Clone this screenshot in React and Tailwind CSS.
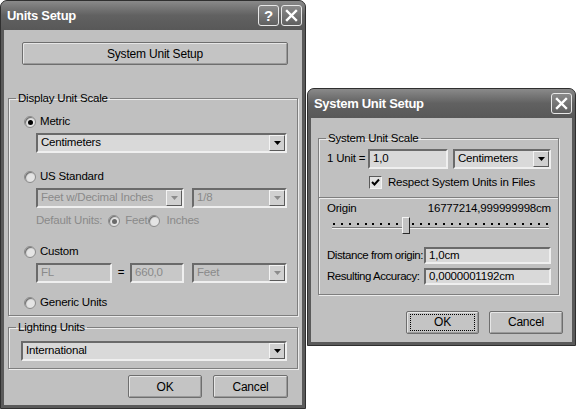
import React from "react";

// Shared look
const FONT = "font-['Liberation_Sans',Arial,sans-serif]";
const SUNKEN =
  "border-2 border-t-[#6a6a6a] border-l-[#6a6a6a] border-b-[#efefef] border-r-[#efefef]";

const TitleButton = ({ children }) => (
  <span className="flex h-[21px] w-[21px] items-center justify-center rounded-[3px] border border-[#e8e8e8] bg-gradient-to-b from-[#8a8a8a] to-[#606060] text-[15px] font-bold leading-none text-white">
    {children}
  </span>
);

const CloseGlyph = () => (
  <svg width="13" height="13" viewBox="0 0 13 13">
    <path d="M2 2 L11 11 M11 2 L2 11" stroke="#fff" strokeWidth="2.4" strokeLinecap="square" />
  </svg>
);

const Window = ({ title, help, className = "", children }) => (
  <div className={`flex flex-col rounded-t-[7px] border border-[#2f2f2f] bg-[#5a5a5a] ${className}`}>
    <div className="flex h-[29px] shrink-0 items-center justify-between rounded-t-[6px] bg-gradient-to-b from-[#8a8a8a] via-[#616161] to-[#585858] pl-[6px] pr-[3px]">
      <span className="text-[13px] font-bold tracking-[-0.3px] text-white">{title}</span>
      <div className="flex gap-[2px]">
        {help && <TitleButton>?</TitleButton>}
        <TitleButton>
          <CloseGlyph />
        </TitleButton>
      </div>
    </div>
    <div className="mx-[3px] mb-[3px] flex-1 bg-[#c0c0c0]">{children}</div>
  </div>
);

const Button = ({ className = "", focused, children }) => (
  <div
    className={`flex items-center justify-center rounded-[2px] border border-[#6e6e6e] bg-[#c4c4c4] shadow-[inset_1px_1px_0_#e6e6e6,inset_-1px_-1px_0_#9a9a9a] text-[12px] text-black ${className}`}
  >
    {focused ? (
      <span className="flex h-[17px] w-[65px] items-center justify-center border border-dotted border-black">
        {children}
      </span>
    ) : (
      children
    )}
  </div>
);

const Arrow = ({ disabled }) => (
  <span className="flex h-[16px] w-[16px] shrink-0 items-center justify-center border border-t-[#f4f4f4] border-l-[#f4f4f4] border-b-[#5a5a5a] border-r-[#5a5a5a] bg-[#d0d0d0]">
    <svg width="7" height="4" viewBox="0 0 7 4">
      <path d="M0 0 H7 L3.5 4 Z" fill={disabled ? "#8c8c8c" : "#000"} />
    </svg>
  </span>
);

const Dropdown = ({ value, disabled, className = "" }) => (
  <div
    className={`flex h-[20px] items-center ${SUNKEN} ${
      disabled ? "bg-[#c4c4c4] text-[#8a8a8a]" : "bg-[#d9d9d9] text-black"
    } ${className}`}
  >
    <span className="flex-1 truncate pl-[3px]">{value}</span>
    <Arrow disabled={disabled} />
  </div>
);

const Field = ({ value, disabled, className = "" }) => (
  <div
    className={`flex shrink-0 items-center whitespace-nowrap ${SUNKEN} ${
      disabled ? "bg-[#c8c8c8] text-[#8a8a8a]" : "bg-[#d9d9d9] text-black"
    } pl-[3px] ${className}`}
  >
    {value}
  </div>
);

const Radio = ({ checked, disabled }) => (
  <span className="flex h-[12px] w-[12px] shrink-0 items-center justify-center rounded-full border border-[#8a8a8a] bg-[#e4e4e4] shadow-[inset_1px_1px_1px_#6a6a6a]">
    {checked && (
      <span className={`h-[5px] w-[5px] rounded-full ${disabled ? "bg-[#6a6a6a]" : "bg-black"}`} />
    )}
  </span>
);

const Group = ({ label, className = "", children }) => (
  <fieldset
    className={`border border-[#7e7e7e] shadow-[1px_1px_0_#ececec,inset_1px_1px_0_#ececec] ${className}`}
  >
    <legend className="ml-[7px] px-[2px] leading-[14px] text-black">{label}</legend>
    {children}
  </fieldset>
);

const UnitsSetup = () => (
  <Window title="Units Setup" help className="h-[409px] w-[306px]">
    <div className="flex flex-col pt-[12px]">
      <Button className="ml-[18px] h-[23px] w-[266px]">System Unit Setup</Button>

      <Group label="Display Unit Scale" className="ml-[4px] mt-[26px] w-[290px] pb-[5px]">
        <div className="mt-[10px] flex h-[14px] items-center gap-[4px] pl-[15px]">
          <Radio checked />
          <span>Metric</span>
        </div>
        <Dropdown value="Centimeters" className="ml-[27px] mt-[4px] w-[251px]" />

        <div className="mt-[17px] flex h-[14px] items-center gap-[4px] pl-[15px]">
          <Radio />
          <span>US Standard</span>
        </div>
        <div className="ml-[27px] mt-[4px] flex gap-[8px]">
          <Dropdown value="Feet w/Decimal Inches" disabled className="w-[148px]" />
          <Dropdown value="1/8" disabled className="w-[95px]" />
        </div>
        <div className="ml-[27px] mt-[6px] flex h-[14px] items-center text-[#8a8a8a]">
          <span>Default Units:</span>
          <span className="ml-[6px]">
            <Radio checked disabled />
          </span>
          <span className="ml-[5px]">Feet</span>
          <span className="ml-[1px]">
            <Radio disabled />
          </span>
          <span className="ml-[6px]">Inches</span>
        </div>

        <div className="mt-[17px] flex h-[14px] items-center gap-[4px] pl-[15px]">
          <Radio />
          <span>Custom</span>
        </div>
        <div className="ml-[27px] mt-[4px] flex items-center">
          <Field value="FL" disabled className="h-[20px] w-[76px]" />
          <span className="w-[18px] text-center">=</span>
          <Field value="660,0" disabled className="h-[20px] w-[54px]" />
          <Dropdown value="Feet" disabled className="ml-[8px] w-[95px]" />
        </div>

        <div className="mt-[13px] flex h-[14px] items-center gap-[4px] pl-[15px]">
          <Radio />
          <span>Generic Units</span>
        </div>
      </Group>

      <Group label="Lighting Units" className="ml-[4px] mt-[4px] w-[290px] pb-[7px]">
        <Dropdown value="International" className="ml-[12px] mt-[7px] w-[266px]" />
      </Group>

      <div className="mt-[6px] flex justify-end gap-[11px] pr-[14px]">
        <Button className="h-[23px] w-[74px]">OK</Button>
        <Button className="h-[23px] w-[75px]">Cancel</Button>
      </div>
    </div>
  </Window>
);

const Slider = () => (
  <div className="relative ml-[13px] mt-[1px] h-[17px] w-[217px]">
    <div className="flex h-[8px] items-end justify-between px-[1px]">
      {Array.from({ length: 28 }).map((_, i) => (
        <span key={i} className="h-[2px] w-[2px] bg-black" />
      ))}
    </div>
    <div className="mt-[2px] h-[2px] border-t border-t-[#7a7a7a] border-b border-b-[#f0f0f0]" />
    <span className="absolute left-[70px] top-0 h-[17px] w-[8px] border border-t-[#f4f4f4] border-l-[#f4f4f4] border-b-[#2a2a2a] border-r-[#2a2a2a] bg-[#c4c4c4]" />
  </div>
);

const SystemUnitSetup = () => (
  <Window title="System Unit Setup" className="mt-[88px] ml-[1px] h-[258px] w-[269px]">
    <div className="flex flex-col pt-[13px]">
      <Group label="System Unit Scale" className="ml-[7px] w-[241px] pb-[8px]">
        <div className="mt-[4px] flex items-center whitespace-nowrap pl-[8px]">
          <span className="w-[41px]">1 Unit =</span>
          <Field value="1,0" className="h-[20px] w-[80px]" />
          <Dropdown value="Centimeters" className="ml-[5px] w-[98px]" />
        </div>
        <div className="ml-[50px] mt-[7px] flex h-[13px] items-center gap-[6px] whitespace-nowrap">
          <span className="flex h-[13px] w-[13px] items-center justify-center border border-t-[#5a5a5a] border-l-[#5a5a5a] border-b-[#f2f2f2] border-r-[#f2f2f2] bg-[#e2e2e2]">
            <svg width="9" height="9" viewBox="0 0 9 9">
              <path d="M1 4 L3.5 6.5 L8 1.5" fill="none" stroke="#000" strokeWidth="2" />
            </svg>
          </span>
          <span>Respect System Units in Files</span>
        </div>
        <div className="mt-[8px] border-t border-t-[#7e7e7e] shadow-[0_1px_0_#ececec]" />
        <div className="mt-[4px] flex h-[14px] items-center justify-between whitespace-nowrap pl-[8px] pr-[7px]">
          <span>Origin</span>
          <span>16777214,999999998cm</span>
        </div>
        <Slider />
        <div className="mt-[13px] flex items-center whitespace-nowrap pl-[8px] pr-[7px]">
          <span className="shrink-0 tracking-[-0.45px]">Distance from origin:</span>
          <Field value="1,0cm" className="ml-auto h-[17px] w-[127px]" />
        </div>
        <div className="mt-[4px] flex items-center whitespace-nowrap pl-[8px] pr-[7px]">
          <span className="shrink-0 tracking-[-0.45px]">Resulting Accuracy:</span>
          <Field value="0,0000001192cm" className="ml-auto h-[17px] w-[127px]" />
        </div>
      </Group>

      <div className="mt-[16px] flex justify-end gap-[10px] pr-[9px]">
        <Button focused className="h-[23px] w-[73px]">OK</Button>
        <Button className="h-[23px] w-[74px]">Cancel</Button>
      </div>
    </div>
  </Window>
);

export default function App() {
  return (
    <div className={`flex h-[411px] w-[576px] items-start bg-white text-[11.5px] tracking-[-0.2px] text-black ${FONT}`}>
      <UnitsSetup />
      <SystemUnitSetup />
    </div>
  );
}
